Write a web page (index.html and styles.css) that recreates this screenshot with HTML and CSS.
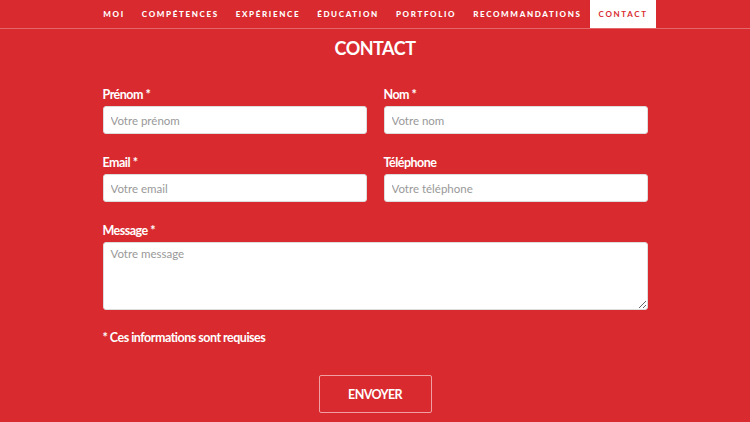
FILE: index.html
```html
<!DOCTYPE html>
<html lang="fr">
<head>
<meta charset="utf-8">
<title>Contact</title>
<link rel="stylesheet" href="styles.css">
</head>
<body>
<nav class="nav">
  <ul class="nav-list">
    <li class="nav-item">Moi</li>
    <li class="nav-item">Compétences</li>
    <li class="nav-item">Expérience</li>
    <li class="nav-item">Éducation</li>
    <li class="nav-item">Portfolio</li>
    <li class="nav-item">Recommandations</li>
    <li class="nav-item active">Contact</li>
  </ul>
</nav>
<main class="section">
  <h1 class="title">CONTACT</h1>
  <form class="form">
    <div class="grid">
      <div class="field">
        <label class="label">Prénom *</label>
        <input class="input" type="text" placeholder="Votre prénom">
      </div>
      <div class="field">
        <label class="label">Nom *</label>
        <input class="input" type="text" placeholder="Votre nom">
      </div>
      <div class="field">
        <label class="label">Email *</label>
        <input class="input" type="text" placeholder="Votre email">
      </div>
      <div class="field">
        <label class="label">Téléphone</label>
        <input class="input" type="text" placeholder="Votre téléphone">
      </div>
      <div class="field wide">
        <label class="label">Message *</label>
        <textarea class="textarea" placeholder="Votre message"></textarea>
      </div>
    </div>
    <p class="note">* Ces informations sont requises</p>
    <div class="actions">
      <button class="btn" type="button">ENVOYER</button>
    </div>
  </form>
</main>
</body>
</html>
```
FILE: styles.css
```css
* { box-sizing: border-box; }
html, body {
  margin: 0;
  padding: 0;
  background: #d92b2f;
  font-family: Lato, "Open Sans", sans-serif;
  color: #fff;
  height: 100%;
  overflow: hidden;
}
.nav {
  border-bottom: 1px solid #e4676a;
  height: 29px;
}
.nav-list {
  list-style: none;
  margin: 0;
  padding: 0;
  display: flex;
  justify-content: center;
  height: 28px;
}
.nav-item {
  display: flex;
  align-items: center;
  padding: 0 8px 0 9px;
  font-size: 8px;
  font-weight: 900;
  letter-spacing: 1.65px;
  text-transform: uppercase;
  color: #fff;
}
.nav-item.active {
  background: #fff;
  color: #d92b2f;
  font-weight: 700;
}
.section {
  width: 545px;
  margin: 0 auto;
}
.title {
  margin: 8px 0 0;
  text-align: center;
  font-size: 18px;
  font-weight: 700;
  line-height: 22px;
  letter-spacing: -0.5px;
}
.form {
  margin-top: 27px;
}
.grid {
  display: grid;
  grid-template-columns: 264px 264px;
  column-gap: 17px;
  row-gap: 20px;
}
.field {
  display: flex;
  flex-direction: column;
}
.wide { grid-column: 1 / span 2; }
.label {
  font-size: 12.5px;
  font-weight: 700;
  line-height: 16px;
  letter-spacing: -0.5px;
  margin-top: 1px;
  margin-bottom: 3px;
}
.input, .textarea {
  width: 100%;
  border: 1px solid #ddd;
  border-radius: 3px;
  background: #fff;
  font-family: Lato, "Open Sans", sans-serif;
  font-size: 11.5px;
  color: #333;
  padding: 0 7px;
  outline: none;
}
.input { height: 28px; }
.textarea {
  height: 68px;
  padding-top: 4px;
  resize: vertical;
}
.input::placeholder, .textarea::placeholder { color: #999; }
.note {
  margin: 20px 0 0;
  font-size: 12.5px;
  font-weight: 700;
  line-height: 16px;
  letter-spacing: -0.5px;
}
.actions {
  display: flex;
  justify-content: center;
  margin-top: 29px;
}
.btn {
  width: 113px;
  height: 38px;
  background: transparent;
  border: 1px solid #f0a0a2;
  border-radius: 2px;
  color: #fff;
  font-family: Lato, "Open Sans", sans-serif;
  font-size: 12.5px;
  font-weight: 700;
  letter-spacing: -0.6px;
}
```
